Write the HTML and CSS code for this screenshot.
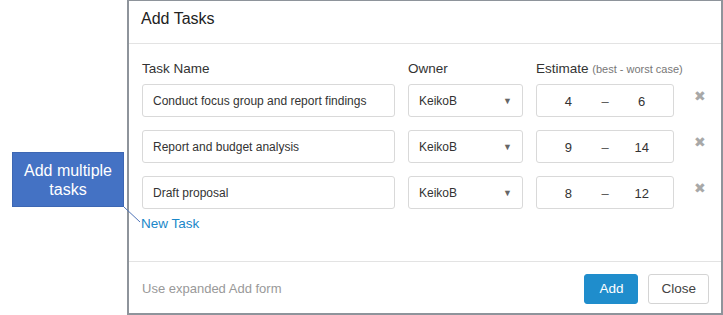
FILE: index.html
```html
<!DOCTYPE html>
<html lang="en">

<head>
    <meta charset="UTF-8">
    <meta name="viewport" content="width=device-width, initial-scale=1.0">
    <title>Add Tasks</title>
    <link rel="stylesheet" href="styles.css">
</head>

<body>
    <div class="callout">Add multiple<br>tasks</div>
    <svg class="callout-line" width="24" height="20" viewBox="0 0 24 20">
        <line x1="1" y1="1" x2="17" y2="16" stroke="#4f74b8" stroke-width="1" />
    </svg>

    <div class="dialog">
        <header class="dialog-header">
            <h1>Add Tasks</h1>
        </header>

        <main class="dialog-body">
            <div class="task-grid">
                <div class="col-label">Task Name</div>
                <div class="col-label">Owner</div>
                <div class="col-label">Estimate <span class="hint">(best - worst case)</span></div>
                <div></div>

                <div class="field name">Conduct focus group and report findings</div>
                <div class="field owner">KeikoB <span class="caret">▼</span></div>
                <div class="field estimate"><span>4</span><span class="dash">–</span><span>6</span></div>
                <div class="remove">✖</div>

                <div class="field name">Report and budget analysis</div>
                <div class="field owner">KeikoB <span class="caret">▼</span></div>
                <div class="field estimate"><span>9</span><span class="dash">–</span><span>14</span></div>
                <div class="remove">✖</div>

                <div class="field name">Draft proposal</div>
                <div class="field owner">KeikoB <span class="caret">▼</span></div>
                <div class="field estimate"><span>8</span><span class="dash">–</span><span>12</span></div>
                <div class="remove">✖</div>
            </div>

            <a class="new-task" href="#">New Task</a>
        </main>

        <footer class="dialog-footer">
            <span class="expanded">Use expanded Add form</span>
            <div class="actions">
                <button class="btn btn-primary">Add</button>
                <button class="btn">Close</button>
            </div>
        </footer>
    </div>
</body>

</html>
```

FILE: styles.css
```css
* {
    margin: 0;
    padding: 0;
    box-sizing: border-box;
}

body {
    font-family: "Liberation Sans", Arial, sans-serif;
    background: #ffffff;
    color: #333333;
    width: 723px;
    height: 315px;
    overflow: hidden;
    position: relative;
}

/* annotation */
.callout {
    position: absolute;
    left: 12px;
    top: 152px;
    width: 112px;
    height: 55px;
    background: #4472c4;
    border: 1px solid #3d67b3;
    color: #ffffff;
    font-size: 16px;
    line-height: 19px;
    text-align: center;
    padding-top: 8px;
}

.callout-line {
    position: absolute;
    left: 123px;
    top: 206px;
}

/* dialog */
.dialog {
    margin-left: 127px;
    width: 596px;
    height: 315px;
    border: 2px solid #8e949b;
    border-top-width: 1px;
    display: flex;
    flex-direction: column;
}

.dialog-header {
    height: 43px;
    border-bottom: 1px solid #e3e3e3;
    padding: 0 12px 0 12px;
    display: flex;
    align-items: center;
}

.dialog-header h1 {
    font-size: 16px;
    font-weight: 400;
    color: #222222;
    margin-top: -6px;
}

.dialog-body {
    flex: 1;
    padding: 16px 12px 0 13px;
}

.task-grid {
    display: grid;
    grid-template-columns: 253px 115px 138px 1fr;
    column-gap: 13px;
    row-gap: 13px;
}

.col-label {
    font-size: 13.5px;
    line-height: 17px;
    color: #333333;
    margin-bottom: -7px;
    white-space: nowrap;
}

.hint {
    font-size: 11px;
    color: #777777;
}

.field {
    height: 33px;
    border: 1px solid #d9d9d9;
    border-radius: 3px;
    font-size: 12px;
    color: #333333;
    display: flex;
    align-items: center;
    padding: 0 10px;
}

.owner {
    justify-content: space-between;
}

.caret {
    font-size: 9px;
    color: #666666;
    margin-right: 0;
}

.estimate {
    display: grid;
    grid-template-columns: 1fr 1fr 1fr;
    padding: 0 13px;
    text-align: center;
    font-size: 13px;
}

.estimate span {
    padding-top: 2px;
}

.estimate .dash {
    color: #555555;
}

.remove {
    color: #a8a8a8;
    font-size: 14px;
    padding-left: 7px;
    padding-top: 4px;
}

.new-task {
    display: inline-block;
    margin-top: 7px;
    margin-left: -1px;
    font-size: 13.5px;
    color: #1a87c9;
    text-decoration: none;
}

.dialog-footer {
    height: 52px;
    border-top: 1px solid #e3e3e3;
    padding: 0 12px 0 13px;
    display: flex;
    align-items: center;
    justify-content: space-between;
}

.expanded {
    font-size: 13px;
    color: #999999;
    margin-top: 2px;
}

.actions {
    display: flex;
    gap: 10px;
    margin-top: 2px;
}

.btn {
    font-family: inherit;
    font-size: 13.5px;
    height: 30px;
    border: 1px solid #d4d4d4;
    border-radius: 3px;
    background: #ffffff;
    color: #444444;
    padding: 0 12px;
}

.btn-primary {
    background: #1f8dcc;
    border-color: #1f8dcc;
    color: #ffffff;
    padding: 0 14px;
}
```
